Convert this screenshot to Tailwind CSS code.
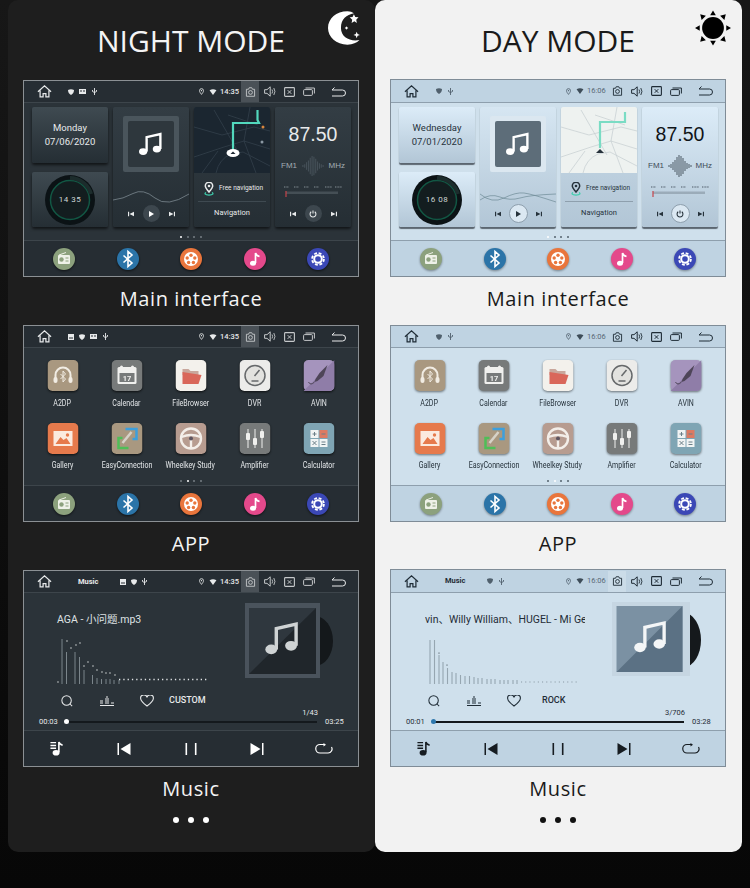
<!DOCTYPE html>
<html lang="en">
<head>
  <meta charset="UTF-8" />
  <title>Night mode / Day mode</title>
  <script src="https://cdn.jsdelivr.net/npm/@tailwindcss/browser@4"></script>
</head>
<body class="w-[750px] h-[888px] overflow-hidden bg-linear-to-b from-[#171717] to-[#070707] font-['Roboto','Noto_Sans_CJK_SC',sans-serif]">

<!-- shared icons -->
<svg class="hidden" xmlns="http://www.w3.org/2000/svg">
  <symbol id="home" viewBox="0 0 16 16"><path d="M1 8.2 8 2l7 6.2M3.3 6.8v7h3.2v-3.6h3v3.6h3.2v-7" fill="none" stroke="currentColor" stroke-width="1.3"/></symbol>
  <symbol id="shield" viewBox="0 0 6 6"><path d="M0 1q3-1.6 6 0 0 3.4-3 5-3-1.600-3-5z" fill="currentColor"/></symbol>
  <symbol id="box" viewBox="0 0 6 6"><path d="M0 0h6v6H0zM1 3.500v1h4v-1z" fill="currentColor" fill-rule="evenodd"/></symbol>
  <symbol id="card" viewBox="0 0 7 5"><path d="M0 0h7v5H0zM1 1.500v1h2v-1zM4 1.500v1h2v-1z" fill="currentColor" fill-rule="evenodd"/></symbol>
  <symbol id="usb" viewBox="0 0 5 7"><path d="M2.500 0v7M.5 2v1.500l2 1 2-1V2" fill="none" stroke="currentColor" stroke-width=".9"/></symbol>
  <symbol id="pin" viewBox="0 0 6 8"><path d="M3 7.500C1.500 5.500.6 4.400.6 3a2.400 2.400 0 0 1 4.800 0C5.400 4.400 4.500 5.500 3 7.500z" fill="none" stroke="currentColor"/><circle cx="3" cy="3" r=".8" fill="currentColor"/></symbol>
  <symbol id="wifi" viewBox="0 0 8 7"><path d="M0 1.500q4-2.400 8 0L4 7z" fill="currentColor"/></symbol>
  <symbol id="cam" viewBox="0 0 12 11"><path d="M1.500 2.500h2.300L4.600.8h2.800l.8 1.700h2.300v7.700h-9z" fill="none" stroke="currentColor"/><circle cx="6" cy="6" r="2.100" fill="none" stroke="currentColor"/></symbol>
  <symbol id="speaker" viewBox="0 0 12 11"><path d="M.6 3.700h2.400L6.200.8v9.400L3 7.300H.6z" fill="none" stroke="currentColor"/><path d="M8 3.500q1.300 2 0 4M9.800 2q2.300 3.500 0 7" fill="none" stroke="currentColor" stroke-width=".9"/></symbol>
  <symbol id="xbox" viewBox="0 0 11 10"><rect x=".6" y=".6" width="9.800" height="8.800" rx=".8" fill="none" stroke="currentColor" stroke-width="1.100"/><path d="m3.700 3.200 3.600 3.600m0-3.600L3.700 6.800" stroke="currentColor"/></symbol>
  <symbol id="windows" viewBox="0 0 12 9"><rect x=".6" y="2.600" width="8.800" height="5.800" rx="1" fill="none" stroke="currentColor"/><path d="M2.500 1h8.900v5.500" fill="none" stroke="currentColor"/></symbol>
  <symbol id="back" viewBox="0 0 15 10"><path d="M3.500.5 1 3h10.500a3 3 0 0 1 0 6H1" fill="none" stroke="currentColor"/></symbol>

  <symbol id="d-radio" viewBox="0 0 22 22"><circle cx="11" cy="11" r="11" fill="#8ca17d"/><rect x="5" y="7" width="12" height="9" rx="1" fill="#eef1e8"/><circle cx="8.500" cy="11.500" r="2.200" fill="#8ca17d"/><path d="M12.500 10h3M12.500 13h3" stroke="#8ca17d"/><path d="m6 7 7-2.500" stroke="#eef1e8"/></symbol>
  <symbol id="d-bt" viewBox="0 0 22 22"><circle cx="11" cy="11" r="11" fill="#2b74a8"/><path d="m6.500 7.500 8.500 7.500-4 3.500V3.500l4 3.500-8.500 7.500" fill="none" stroke="#fff" stroke-width="1.600"/></symbol>
  <symbol id="d-film" viewBox="0 0 22 22"><circle cx="11" cy="11" r="11" fill="#e9753c"/><circle cx="11" cy="11" r="7" fill="#fff"/><g fill="#e9753c"><circle cx="11" cy="7.200" r="1.700"/><circle cx="14.800" cy="10" r="1.700"/><circle cx="13.400" cy="14.500" r="1.700"/><circle cx="8.600" cy="14.500" r="1.700"/><circle cx="7.200" cy="10" r="1.700"/></g></symbol>
  <symbol id="d-note" viewBox="0 0 22 22"><circle cx="11" cy="11" r="11" fill="#e4498b"/><path d="M11.500 15V5q.5 2.500 4 3.500" fill="none" stroke="#fff" stroke-width="1.700"/><ellipse cx="9" cy="15.200" rx="3" ry="2.500" fill="#fff"/></symbol>
  <symbol id="d-gear" viewBox="0 0 22 22"><circle cx="11" cy="11" r="11" fill="#3b48b6"/><circle cx="11" cy="11" r="5.900" fill="none" stroke="#fff" stroke-width="1.800" stroke-dasharray="2.900 1.730"/><circle cx="11" cy="11" r="3.800" fill="none" stroke="#fff" stroke-width="2"/></symbol>

  <symbol id="note" viewBox="0 0 24 24"><path d="M8.500 18V6.500l11-2.500v12" fill="none" stroke="currentColor" stroke-width="1.900"/><ellipse cx="5.700" cy="18" rx="3.300" ry="2.700" fill="currentColor"/><ellipse cx="16.700" cy="16" rx="3.300" ry="2.700" fill="currentColor"/></symbol>
  <symbol id="prev" viewBox="0 0 8 8"><path d="M0 1h1.500v6H0zM8 1v6L2 4z" fill="currentColor"/></symbol>
  <symbol id="next" viewBox="0 0 8 8"><path d="M6.500 1H8v6H6.500zM0 1v6l6-3z" fill="currentColor"/></symbol>
  <symbol id="clock" viewBox="0 0 50 50"><circle cx="25" cy="25" r="25" fill="#0b1215"/><circle cx="25" cy="25" r="19.500" fill="#131d1f" stroke="#125744" stroke-width="1.500"/><path d="M25 3a22 22 0 0 1 21 16" fill="none" stroke="#1c2c2c" stroke-width="4"/></symbol>
  <symbol id="map" viewBox="0 0 76 66"><g fill="none" stroke="currentColor" stroke-width=".7"><path d="M20 3 46 48M0 50l30-10 20-6 26 8M22 66q3-14 15-19l12-2 27 14M56 0l-6 34 12 32M0 20l28 8 32-8 16 4M8 66 24 44M34 8l30 10"/></g></symbol>
  <symbol id="wave" viewBox="0 0 24 22"><path d="M1 10v2M3 9v4M5 7v8M7 5v12M9 2v18M11 0v22M13 1v20M15 3v16M17 6v10M19 8v6M21 9v4M23 10v2" stroke="currentColor" stroke-width="1.100"/></symbol>
  <symbol id="scale" viewBox="0 0 60 14"><path d="M1 3h5M11 3h5M21 3h5M31 3h5M42 3h7M52 3h7" stroke="currentColor" stroke-width="1.400" stroke-dasharray="1 .6" opacity=".6"/><rect x="3" y="7.500" width="52" height="2.500" fill="currentColor" opacity=".28"/><path d="M3 7v6" stroke="#c7434a" stroke-width="1.200"/></symbol>
  <symbol id="navpin" viewBox="0 0 12 14"><path d="M6 10C3.500 7 2.300 5.600 2.300 4a3.700 3.700 0 0 1 7.400 0C9.700 5.600 8.500 7 6 10z" fill="none" stroke="currentColor" stroke-width="1.500"/><circle cx="6" cy="4" r="1.300" fill="currentColor"/><path d="M3 10.500q-3 2 3 2.700 6-.7 3-2.700" fill="none" stroke="#3fcfae" stroke-width="1.200"/></symbol>
  <symbol id="power" viewBox="0 0 9 9"><path d="M2.500 2a3.300 3.300 0 1 0 4 0M4.500.5V4" fill="none" stroke="currentColor" stroke-width="1.200"/></symbol>

  <symbol id="a-a2dp" viewBox="0 0 31 31"><rect width="31" height="31" rx="5" fill="#a99880"/><path d="M8 19v-4a7.500 7.500 0 0 1 15 0v4" fill="none" stroke="#f1ece3" stroke-width="2"/><rect x="6" y="17" width="4" height="6" rx="2" fill="#f1ece3"/><rect x="21" y="17" width="4" height="6" rx="2" fill="#f1ece3"/><path d="m13 14 5 5-2.500 3V11l2.500 3-5 5" fill="none" stroke="#f1ece3"/></symbol>
  <symbol id="a-cal" viewBox="0 0 31 31"><rect width="31" height="31" rx="5" fill="#777a7a"/><rect x="6" y="7" width="19" height="17" rx="1.500" fill="#f0f0ee"/><rect x="8" y="13" width="15" height="9" fill="#777a7a"/><circle cx="10" cy="7" r="1.500" fill="#f0f0ee"/><circle cx="21" cy="7" r="1.500" fill="#f0f0ee"/><text x="15.500" y="20.500" text-anchor="middle" font-size="7.500" font-weight="700" fill="#f0f0ee" font-family="Roboto">17</text></symbol>
  <symbol id="a-file" viewBox="0 0 31 31"><rect width="31" height="31" rx="5" fill="#f3f1ec"/><path d="M7 9h6l2 2h8v4H7z" fill="#c9a79c"/><path d="M7 24V12l19 3-3 9z" fill="#d9675a"/></symbol>
  <symbol id="a-dvr" viewBox="0 0 31 31"><rect width="31" height="31" rx="5" fill="#ececea"/><circle cx="15.500" cy="15.500" r="10" fill="#e2e2df" stroke="#66696b" stroke-width="1.500"/><path d="m15 16 5-6" stroke="#66696b" stroke-width="1.500"/><path d="M12 21h7" stroke="#66696b" stroke-width="1.500"/></symbol>
  <symbol id="a-avin" viewBox="0 0 31 31"><rect width="31" height="31" rx="5" fill="#a594bd"/><path d="M31 0v26a5 5 0 0 1-5 5H0z" fill="#8f7da8"/><path d="m24 5-8 8-4 6-1 3 3-1 6-5z" fill="#4e4558"/><path d="M11 22q-4 4-6 0" fill="none" stroke="#4e4558"/></symbol>
  <symbol id="a-gal" viewBox="0 0 31 31"><rect width="31" height="31" rx="5" fill="#e67a4c"/><rect x="6" y="8" width="19" height="15" fill="#fbeadf"/><path d="m8 21 5-7 3 3 3-2 4 6z" fill="#e67a4c"/><circle cx="20" cy="12" r="1.700" fill="#e67a4c"/></symbol>
  <symbol id="a-easy" viewBox="0 0 31 31"><rect width="31" height="31" rx="5" fill="#a99880"/><path d="M14 6h11v10h-4" fill="none" stroke="#3d9fdc" stroke-width="2.500"/><path d="M17 25H7V15h4" fill="none" stroke="#4fbe57" stroke-width="2.500"/><path d="m11 20 9-11" stroke="#d6d2c8" stroke-width="2.500"/></symbol>
  <symbol id="a-wheel" viewBox="0 0 31 31"><rect width="31" height="31" rx="5" fill="#b79c90"/><circle cx="15.500" cy="15.500" r="10" fill="none" stroke="#f3eee9" stroke-width="2.400"/><path d="M6 14q9.500-4 19 0M15.500 17v8" stroke="#f3eee9" stroke-width="2.400" fill="none"/><circle cx="15.500" cy="15.500" r="2" fill="#5e5560"/></symbol>
  <symbol id="a-amp" viewBox="0 0 31 31"><rect width="31" height="31" rx="5" fill="#777a7a"/><path d="M8.500 6v19M15.500 6v19M22.500 6v19" stroke="#f0f0ee"/><rect x="6.500" y="10" width="4" height="7" rx="1" fill="#f0f0ee"/><rect x="13.500" y="15" width="4" height="7" rx="1" fill="#f0f0ee"/><rect x="20.500" y="8" width="4" height="7" rx="1" fill="#f0f0ee"/></symbol>
  <symbol id="a-calc" viewBox="0 0 31 31"><rect width="31" height="31" rx="5" fill="#7fa5b4"/><rect x="7" y="7" width="8" height="8" fill="#f1f4f4"/><rect x="16" y="7" width="8" height="8" fill="#dc7a62"/><rect x="7" y="16" width="8" height="8" fill="#f1f4f4"/><rect x="16" y="16" width="8" height="8" fill="#f1f4f4"/><path d="M9 11h4M11 9v4M18 11h4M9 18l4 4m0-4-4 4M18 19h4M18 21.500h4" stroke="#6b7f88"/></symbol>

  <symbol id="m-search" viewBox="0 0 14 14"><circle cx="6.500" cy="6.500" r="5.500" fill="none" stroke="currentColor" stroke-width="1.200"/><path d="m10.500 10.500 2.500 2.500" stroke="currentColor" stroke-width="1.200"/></symbol>
  <symbol id="m-eq" viewBox="0 0 14 10"><path d="M0 9.500h14M0 7h3M5 7h4M11 7h3M0 5h3M5 5h4M5 3h4M6 1h2" stroke="currentColor"/></symbol>
  <symbol id="m-heart" viewBox="0 0 14 12"><path d="M7 11C3 8 .7 6.200.7 3.700A3 3 0 0 1 7 2.500a3 3 0 0 1 6.300 1.200C13.300 6.200 11 8 7 11z" fill="none" stroke="currentColor" stroke-width="1.100"/></symbol>
  <symbol id="m-list" viewBox="0 0 14 16"><path d="M0 1h6v1.500H0zM0 4h6v1.500H0zM0 7h6v1.500H0z" fill="currentColor"/><path d="M9 12V1q.5 2.500 4 3.500" fill="none" stroke="currentColor" stroke-width="1.700"/><ellipse cx="6" cy="12.500" rx="3.700" ry="3" fill="currentColor"/></symbol>
  <symbol id="m-prev" viewBox="0 0 13 12"><path d="M0 0h1.500v12H0zM13 0v12L3 6z" fill="currentColor"/></symbol>
  <symbol id="m-next" viewBox="0 0 13 12"><path d="M11.500 0H13v12h-1.500zM0 0v12l10-6z" fill="currentColor"/></symbol>
  <symbol id="m-pause" viewBox="0 0 11 12"><path d="M0 0h1.600v12H0zM9.400 0H11v12H9.400z" fill="currentColor"/></symbol>
  <symbol id="m-repeat" viewBox="0 0 18 11"><path d="M9 1.500H5a4 4 0 0 0 0 8.500h8a4 4 0 0 0 3.500-6" fill="none" stroke="currentColor" stroke-width="1.200"/><path d="M8.500 0v3.500L11 1.700z" fill="currentColor"/></symbol>
</svg>

<div class="flex pl-2 h-[852px]">

  <!-- NIGHT -->
  <section class="relative w-[367px] h-[852px] pl-[15px] rounded-[10px] bg-[#1e1e1e] text-[#f4f4f4]">
    <h2 class="w-[336px] h-[80px] flex items-center justify-center text-[30px] font-['Open_Sans',sans-serif] font-normal">NIGHT MODE</h2>
    <svg class="absolute left-[320px] top-[10px] w-[37px] h-[36px]" viewBox="0 0 40 38"><path d="M21 1C9 1 0 9 0 19s9 18 21 18c6 0 10-2 13-5-10 2-20-3-20-13S20 5 28 3c-2-1-4-2-7-2z" fill="#fff"/><path d="m28 4 1.500 3 3.500.5-2.500 2.500.7 3.500-2.700-1.700-3 1.700.7-3.500L23.500 7.500l3-.5zM31 23l1 2.500 2.500 1-2.500 1-1 2.500-1-2.500-2.500-1 2.500-1zM20 17l.7 1.300 1.300.7-1.300.7-.7 1.300-.7-1.300-1.300-.7 1.300-.7z" fill="#fff"/></svg>

    <!-- main -->
    <div class="w-[336px] h-[197px] border border-[#8b9094] bg-[#2b3339] flex flex-col">
      <div class="h-[22px] shrink-0 flex items-center pl-[13px] pr-[12px] bg-[#262d33] border-b border-[#3d454b] text-[#e8eaeb]">
        <svg class="w-[15px] h-[15px]"><use href="#home"/></svg>
        <div class="flex items-center gap-[5px] ml-[16px]">
          <svg class="w-[6px] h-[6px]"><use href="#shield"/></svg>
          <svg class="w-[7px] h-[5px]"><use href="#card"/></svg>
          <svg class="w-[5px] h-[7px] ml-[1px]"><use href="#usb"/></svg>
        </div>
        <div class="ml-auto flex items-center h-[21px]">
          <svg class="w-[5px] h-[7px]"><use href="#pin"/></svg>
          <svg class="w-[8px] h-[6px] ml-[5px]"><use href="#wifi"/></svg>
          <span class="ml-[3px] w-[18px] text-[7.5px] font-medium">14:35</span>
          <div class="ml-[3px] w-[18px] h-[21px] flex items-center justify-center bg-[#4a5157] text-[#c5c8ca]"><svg class="w-[11px] h-[10px]"><use href="#cam"/></svg></div>
          <svg class="w-[12px] h-[11px] ml-[5px] text-[#c5c8ca]"><use href="#speaker"/></svg>
          <svg class="w-[11px] h-[10px] ml-[8px] text-[#c5c8ca]"><use href="#xbox"/></svg>
          <svg class="w-[12px] h-[9px] ml-[8px] text-[#c5c8ca]"><use href="#windows"/></svg>
          <svg class="w-[15px] h-[10px] ml-[16px]"><use href="#back"/></svg>
        </div>
      </div>
      <div class="h-[137px] shrink-0 px-[8px] pt-[4px]">
        <div class="grid grid-cols-[76px_76px_76px_76px] gap-x-[5px] h-[120px]">
          <div class="flex flex-col gap-[9px]">
            <div class="h-[56px] rounded-[2px] bg-linear-to-b from-[#3f4a51] to-[#252e34] shadow-[0_2px_3px_rgba(0,0,0,.6)] flex flex-col items-center justify-center text-[9.5px] leading-[14px] text-[#e8eaeb]"><span>Monday</span><span>07/06/2020</span></div>
            <div class="h-[55px] rounded-[2px] bg-linear-to-b from-[#3f4a51] to-[#252e34] shadow-[0_2px_3px_rgba(0,0,0,.6)] flex items-center justify-center">
              <div class="relative w-[50px] h-[50px]"><svg class="w-[50px] h-[50px]"><use href="#clock"/></svg><span class="absolute inset-0 flex items-center justify-center text-[8px] tracking-[.5px] text-[#cfd6d6]">14 35</span></div>
            </div>
          </div>
          <div class="rounded-[2px] bg-linear-to-b from-[#333d44] to-[#252e34] shadow-[0_2px_3px_rgba(0,0,0,.6)] flex flex-col items-center pt-[9px]">
            <div class="w-[56px] h-[56px] p-[5px] bg-[#4a555c] rounded-[2px]"><div class="w-[46px] h-[46px] rounded-[2px] bg-[#2e373d] flex items-center justify-center text-white"><svg class="w-[30px] h-[30px]"><use href="#note"/></svg></div></div>
            <svg class="w-[76px] h-[14px] mt-[18px]" viewBox="0 0 76 14"><path d="M0 10Q10 9 20 3.500T42 8t34-4" fill="none" stroke="#7b888f" stroke-width=".8"/></svg>
            <div class="flex items-center text-[#e8eaeb] mt-auto mb-[5px]">
              <svg class="w-[6px] h-[6px]"><use href="#prev"/></svg>
              <div class="w-[17px] h-[17px] mx-[9px] rounded-full bg-[#3d474e] flex items-center justify-center"><div class="w-0 h-0 border-y-[3px] border-y-transparent border-l-[5px] border-l-white ml-[1px]"></div></div>
              <svg class="w-[6px] h-[6px]"><use href="#next"/></svg>
            </div>
          </div>
          <div class="rounded-[2px] overflow-hidden bg-linear-to-b from-[#333d44] to-[#252e34] shadow-[0_2px_3px_rgba(0,0,0,.6)] flex flex-col items-center text-[#e8eaeb]">
            <svg class="w-[76px] h-[66px] shrink-0 bg-[#1b2630] text-[#36434f]" viewBox="0 0 76 66"><use href="#map"/><path d="M39 43V16h26l-1.500-3V3" fill="none" stroke="#52d8bd" stroke-width="2.200"/><ellipse cx="39" cy="46" rx="6.500" ry="4" fill="#fff"/><path d="m36.500 47 2.500-2.500 2.500 2.500z" fill="#1b2630"/><circle cx="69" cy="20" r="1.500" fill="#d8873f"/><circle cx="68" cy="35" r="1.500" fill="#8b98a3"/></svg>
            <div class="flex items-center mt-[9px] self-start pl-[9px]"><svg class="w-[12px] h-[14px]"><use href="#navpin"/></svg><span class="ml-[4px] text-[6.5px] whitespace-nowrap">Free navigation</span></div>
            <div class="w-[68px] h-px bg-[#3f4a51] mt-[5px]"></div>
            <span class="text-[7.500px] mt-[5px]">Navigation</span>
          </div>
          <div class="rounded-[2px] bg-linear-to-b from-[#333d44] to-[#252e34] shadow-[0_2px_3px_rgba(0,0,0,.6)] flex flex-col items-center text-[#e8eaeb]">
            <span class="font-['Liberation_Sans',sans-serif] text-[19.500px] leading-[20px] mt-[17px]">87.50</span>
            <div class="flex items-center w-[64px] justify-between mt-[11px] font-['Liberation_Sans',sans-serif] text-[8px] text-[#a3adb2]"><span>FM1</span><svg class="w-[22px] h-[22px] text-[#47525a]"><use href="#wave"/></svg><span>MHz</span></div>
            <svg class="w-[60px] h-[14px] mt-[7px] text-[#8f9aa0]"><use href="#scale"/></svg>
            <div class="flex items-center text-[#e8eaeb] mt-auto mb-[5px]">
              <svg class="w-[6px] h-[6px]"><use href="#prev"/></svg>
              <div class="w-[17px] h-[17px] mx-[9px] rounded-full bg-[#3d474e] flex items-center justify-center"><svg class="w-[8px] h-[8px]"><use href="#power"/></svg></div>
              <svg class="w-[6px] h-[6px]"><use href="#next"/></svg>
            </div>
          </div>
        </div>
        <div class="flex justify-center gap-[4.500px] mt-[9px]"><i class="w-[2px] h-[2px] rounded-full bg-white"></i><i class="w-[2px] h-[2px] rounded-full bg-[#777f85]"></i><i class="w-[2px] h-[2px] rounded-full bg-[#777f85]"></i><i class="w-[2px] h-[2px] rounded-full bg-[#777f85]"></i></div>
      </div>
      <div class="h-[36px] shrink-0 px-[29px] flex items-center justify-between bg-[#262d33] border-t border-[#3d454b]">
        <svg class="w-[22px] h-[22px] drop-shadow-[0_1px_1px_rgba(0,0,0,.6)]"><use href="#d-radio"/></svg>
        <svg class="w-[22px] h-[22px] drop-shadow-[0_1px_1px_rgba(0,0,0,.6)]"><use href="#d-bt"/></svg>
        <svg class="w-[22px] h-[22px] drop-shadow-[0_1px_1px_rgba(0,0,0,.6)]"><use href="#d-film"/></svg>
        <svg class="w-[22px] h-[22px] drop-shadow-[0_1px_1px_rgba(0,0,0,.6)]"><use href="#d-note"/></svg>
        <svg class="w-[22px] h-[22px] drop-shadow-[0_1px_1px_rgba(0,0,0,.6)]"><use href="#d-gear"/></svg>
      </div>
    </div>
    <p class="w-[336px] h-[48px] pb-[4px] flex items-center justify-center text-[20px] tracking-[.6px] font-['Open_Sans',sans-serif]">Main interface</p>

    <!-- app -->
    <div class="w-[336px] h-[197px] border border-[#8b9094] bg-[#2b3339] flex flex-col">
      <div class="h-[22px] shrink-0 flex items-center pl-[13px] pr-[12px] bg-[#262d33] border-b border-[#3d454b] text-[#e8eaeb]">
        <svg class="w-[15px] h-[15px]"><use href="#home"/></svg>
        <div class="flex items-center gap-[5px] ml-[16px]">
          <svg class="w-[6px] h-[6px]"><use href="#box"/></svg>
          <svg class="w-[6px] h-[6px]"><use href="#shield"/></svg>
          <svg class="w-[7px] h-[5px]"><use href="#card"/></svg>
          <svg class="w-[5px] h-[7px] ml-[1px]"><use href="#usb"/></svg>
        </div>
        <div class="ml-auto flex items-center h-[21px]">
          <svg class="w-[5px] h-[7px]"><use href="#pin"/></svg>
          <svg class="w-[8px] h-[6px] ml-[5px]"><use href="#wifi"/></svg>
          <span class="ml-[3px] w-[18px] text-[7.5px] font-medium">14:35</span>
          <div class="ml-[3px] w-[18px] h-[21px] flex items-center justify-center bg-[#4a5157] text-[#c5c8ca]"><svg class="w-[11px] h-[10px]"><use href="#cam"/></svg></div>
          <svg class="w-[12px] h-[11px] ml-[5px] text-[#c5c8ca]"><use href="#speaker"/></svg>
          <svg class="w-[11px] h-[10px] ml-[8px] text-[#c5c8ca]"><use href="#xbox"/></svg>
          <svg class="w-[12px] h-[9px] ml-[8px] text-[#c5c8ca]"><use href="#windows"/></svg>
          <svg class="w-[15px] h-[10px] ml-[16px]"><use href="#back"/></svg>
        </div>
      </div>
      <div class="h-[137px] shrink-0 pt-[12px]">
        <div class="w-[320px] mx-auto -translate-x-[.5px] grid grid-cols-5 gap-y-[15px] text-[8.5px] leading-[10px] text-center text-[#e3e6e8]">
          <div class="flex flex-col items-center gap-[6.500px]"><svg class="w-[31px] h-[31px] drop-shadow-[0_1px_1px_rgba(0,0,0,.7)]"><use href="#a-a2dp"/></svg><span class="scale-x-[.83] whitespace-nowrap">A2DP</span></div>
          <div class="flex flex-col items-center gap-[6.500px]"><svg class="w-[31px] h-[31px] drop-shadow-[0_1px_1px_rgba(0,0,0,.7)]"><use href="#a-cal"/></svg><span class="scale-x-[.83] whitespace-nowrap">Calendar</span></div>
          <div class="flex flex-col items-center gap-[6.500px]"><svg class="w-[31px] h-[31px] drop-shadow-[0_1px_1px_rgba(0,0,0,.7)]"><use href="#a-file"/></svg><span class="scale-x-[.83] whitespace-nowrap">FileBrowser</span></div>
          <div class="flex flex-col items-center gap-[6.500px]"><svg class="w-[31px] h-[31px] drop-shadow-[0_1px_1px_rgba(0,0,0,.7)]"><use href="#a-dvr"/></svg><span class="scale-x-[.83] whitespace-nowrap">DVR</span></div>
          <div class="flex flex-col items-center gap-[6.500px]"><svg class="w-[31px] h-[31px] drop-shadow-[0_1px_1px_rgba(0,0,0,.7)]"><use href="#a-avin"/></svg><span class="scale-x-[.83] whitespace-nowrap">AVIN</span></div>
          <div class="flex flex-col items-center gap-[6.500px]"><svg class="w-[31px] h-[31px] drop-shadow-[0_1px_1px_rgba(0,0,0,.7)]"><use href="#a-gal"/></svg><span class="scale-x-[.83] whitespace-nowrap">Gallery</span></div>
          <div class="flex flex-col items-center gap-[6.500px]"><svg class="w-[31px] h-[31px] drop-shadow-[0_1px_1px_rgba(0,0,0,.7)]"><use href="#a-easy"/></svg><span class="scale-x-[.83] whitespace-nowrap">EasyConnection</span></div>
          <div class="flex flex-col items-center gap-[6.500px]"><svg class="w-[31px] h-[31px] drop-shadow-[0_1px_1px_rgba(0,0,0,.7)]"><use href="#a-wheel"/></svg><span class="scale-x-[.83] whitespace-nowrap">Wheelkey Study</span></div>
          <div class="flex flex-col items-center gap-[6.500px]"><svg class="w-[31px] h-[31px] drop-shadow-[0_1px_1px_rgba(0,0,0,.7)]"><use href="#a-amp"/></svg><span class="scale-x-[.83] whitespace-nowrap">Amplifier</span></div>
          <div class="flex flex-col items-center gap-[6.500px]"><svg class="w-[31px] h-[31px] drop-shadow-[0_1px_1px_rgba(0,0,0,.7)]"><use href="#a-calc"/></svg><span class="scale-x-[.83] whitespace-nowrap">Calculator</span></div>
        </div>
        <div class="flex justify-center gap-[4.500px] mt-[10px]"><i class="w-[2px] h-[2px] rounded-full bg-[#777f85]"></i><i class="w-[2px] h-[2px] rounded-full bg-white"></i><i class="w-[2px] h-[2px] rounded-full bg-[#777f85]"></i><i class="w-[2px] h-[2px] rounded-full bg-[#777f85]"></i></div>
      </div>
      <div class="h-[36px] shrink-0 px-[29px] flex items-center justify-between bg-[#262d33] border-t border-[#3d454b]">
        <svg class="w-[22px] h-[22px] drop-shadow-[0_1px_1px_rgba(0,0,0,.6)]"><use href="#d-radio"/></svg>
        <svg class="w-[22px] h-[22px] drop-shadow-[0_1px_1px_rgba(0,0,0,.6)]"><use href="#d-bt"/></svg>
        <svg class="w-[22px] h-[22px] drop-shadow-[0_1px_1px_rgba(0,0,0,.6)]"><use href="#d-film"/></svg>
        <svg class="w-[22px] h-[22px] drop-shadow-[0_1px_1px_rgba(0,0,0,.6)]"><use href="#d-note"/></svg>
        <svg class="w-[22px] h-[22px] drop-shadow-[0_1px_1px_rgba(0,0,0,.6)]"><use href="#d-gear"/></svg>
      </div>
    </div>
    <p class="w-[336px] h-[48px] pb-[4px] flex items-center justify-center text-[20px] tracking-[.6px] font-['Open_Sans',sans-serif]">APP</p>

    <!-- music -->
    <div class="w-[336px] h-[197px] border border-[#8b9094] bg-[#2b3339] flex flex-col">
      <div class="h-[22px] shrink-0 flex items-center pl-[13px] pr-[12px] bg-[#262d33] border-b border-[#3d454b] text-[#e8eaeb]">
        <svg class="w-[15px] h-[15px]"><use href="#home"/></svg>
        <span class="ml-[26px] text-[7.5px] font-bold">Music</span>
        <div class="flex items-center gap-[5px] ml-[21px]">
          <svg class="w-[6px] h-[6px]"><use href="#box"/></svg>
          <svg class="w-[6px] h-[6px]"><use href="#shield"/></svg>
          <svg class="w-[5px] h-[7px]"><use href="#usb"/></svg>
        </div>
        <div class="ml-auto flex items-center h-[21px]">
          <svg class="w-[5px] h-[7px]"><use href="#pin"/></svg>
          <svg class="w-[8px] h-[6px] ml-[5px]"><use href="#wifi"/></svg>
          <span class="ml-[3px] w-[18px] text-[7.5px] font-medium">14:35</span>
          <div class="ml-[3px] w-[18px] h-[21px] flex items-center justify-center bg-[#4a5157] text-[#c5c8ca]"><svg class="w-[11px] h-[10px]"><use href="#cam"/></svg></div>
          <svg class="w-[12px] h-[11px] ml-[5px] text-[#c5c8ca]"><use href="#speaker"/></svg>
          <svg class="w-[11px] h-[10px] ml-[8px] text-[#c5c8ca]"><use href="#xbox"/></svg>
          <svg class="w-[12px] h-[9px] ml-[8px] text-[#c5c8ca]"><use href="#windows"/></svg>
          <svg class="w-[15px] h-[10px] ml-[16px]"><use href="#back"/></svg>
        </div>
      </div>
      <div class="h-[137px] shrink-0 text-[#e8eaeb] flex flex-col">
        <div class="h-[115px] flex">
          <div class="w-[221px] pl-[33px] shrink-0">
            <p class="mt-[20px] h-[14px] text-[10.500px] leading-[14px] text-[#dfe2e4] whitespace-nowrap">AGA - 小问题.mp3</p>
            <svg class="w-[152px] h-[46px] mt-[11px]" viewBox="0 0 152 46"><path d="M5 46V1M9.500 46V14M18 46V14M22.500 46V19M27 46V32M35.500 46V37M40 46V40M44.500 46V41M49 46V41M53 46V41M57 46V42M62 46V42" stroke="#7b858b" stroke-width="1"/><path d="M1 44h0M10 3h0M14 10h0M19 7h0M23 5h0M27 28h0M31 24h0M36 28h0M40 32h0M45 34h0M49 35h0M53 35h0M58 37h0" stroke="#f0f2f3" stroke-width="1.300" stroke-linecap="round"/><path d="M62 41.500H152" stroke="#e0e3e5" stroke-width="1.300" stroke-dasharray="1.300 3"/></svg>
            <div class="mt-[9px] flex items-center h-[16px] pl-[4px]">
              <svg class="w-[12px] h-[12px]"><use href="#m-search"/></svg>
              <svg class="w-[14px] h-[10px] ml-[27px]"><use href="#m-eq"/></svg>
              <svg class="w-[14px] h-[12px] ml-[26px]"><use href="#m-heart"/></svg>
              <span class="ml-[15px] text-[9px] font-medium">CUSTOM</span>
            </div>
          </div>
          <svg class="w-[89px] h-[76px] mt-[10px]" viewBox="0 0 89 76"><ellipse cx="70" cy="38" rx="18" ry="25" fill="#14181b"/><rect width="75" height="75" fill="#4a535c"/><rect x="4" y="5" width="67" height="66" fill="#2f373e"/><path d="M71 5v66H4z" fill="#20262b"/><g transform="translate(16 14) scale(1.800)" color="#cfd3d4"><use href="#note" width="24" height="24"/></g></svg>
        </div>
        <p class="mr-[40px] text-right text-[7.5px] leading-[10px]">1/43</p>
        <div class="flex items-center h-[10px] -mt-[1px] pl-[15px] pr-[15px] text-[7.5px]">
          <span class="w-[18px]">00:03</span>
          <div class="relative flex-1 mx-[8px] h-[1.500px] bg-[#14191d]"><i class="absolute -left-[1px] -top-[2px] w-[5px] h-[5px] rounded-full bg-white"></i></div>
          <span class="w-[18px]">03:25</span>
        </div>
      </div>
      <div class="h-[36px] shrink-0 pl-[24px] pr-[25px] flex items-center justify-between bg-[#262d33] border-t border-[#3d454b] text-white">
        <svg class="w-[18px] h-[15px]"><use href="#m-list"/></svg>
        <svg class="w-[18px] h-[12px]"><use href="#m-prev"/></svg>
        <svg class="w-[18px] h-[12px]"><use href="#m-pause"/></svg>
        <svg class="w-[18px] h-[12px]"><use href="#m-next"/></svg>
        <svg class="w-[18px] h-[11px]"><use href="#m-repeat"/></svg>
      </div>
    </div>
    <p class="w-[336px] h-[48px] pb-[4px] flex items-center justify-center text-[20px] tracking-[.6px] font-['Open_Sans',sans-serif]">Music</p>
    <div class="w-[336px] flex justify-center gap-[9px] mt-[2px]"><i class="w-[6px] h-[6px] rounded-full bg-white"></i><i class="w-[6px] h-[6px] rounded-full bg-white"></i><i class="w-[6px] h-[6px] rounded-full bg-white"></i></div>
  </section>

  <!-- DAY -->
  <section class="relative w-[367px] h-[852px] pl-[15px] rounded-[10px] bg-[#f2f2f2] text-[#1a1a1a]">
    <h2 class="w-[336px] h-[79px] pt-[1px] flex items-center justify-center text-[30px] font-['Open_Sans',sans-serif] font-normal">DAY MODE</h2>
    <svg class="absolute left-[320px] top-[10px] w-[36px] h-[36px]" viewBox="0 0 38 37"><circle cx="19" cy="18.500" r="11.500" fill="#000"/><path d="M19 0l3 5h-6zM19 37l3-5h-6zM0 18.500l5-3v6zM38 18.500l-5-3v6zM5.500 4l6 1.500L7 10zM32.500 4l-6 1.500L31 10zM5.500 33l6-1.500L7 27zM32.500 33l-6-1.500L31 27z" fill="#000"/></svg>

    <!-- main -->
    <div class="w-[336px] h-[198px] border border-[#7f8c97] bg-[#cfe0ec] flex flex-col">
      <div class="h-[23px] shrink-0 flex items-center pl-[13px] pr-[12px] bg-[#bfd3e2] border-b border-[#8e9fad] text-[#1f2c36]">
        <svg class="w-[15px] h-[15px]"><use href="#home"/></svg>
        <div class="flex items-center gap-[6px] ml-[17px] text-[#50606d]">
          <svg class="w-[6px] h-[6px]"><use href="#shield"/></svg>
          <svg class="w-[5px] h-[7px]"><use href="#usb"/></svg>
        </div>
        <div class="ml-auto flex items-center h-[21px]">
          <svg class="w-[5px] h-[7px] text-[#50606d]"><use href="#pin"/></svg>
          <svg class="w-[8px] h-[6px] ml-[5px] text-[#3d4c58]"><use href="#wifi"/></svg>
          <span class="ml-[3px] w-[18px] text-[7.5px] text-[#586875]">16:06</span>
          <div class="ml-[3px] w-[18px] h-[21px] flex items-center justify-center"><svg class="w-[11px] h-[10px]"><use href="#cam"/></svg></div>
          <svg class="w-[12px] h-[11px] ml-[5px]"><use href="#speaker"/></svg>
          <svg class="w-[11px] h-[10px] ml-[8px]"><use href="#xbox"/></svg>
          <svg class="w-[12px] h-[9px] ml-[8px]"><use href="#windows"/></svg>
          <svg class="w-[15px] h-[10px] ml-[16px]"><use href="#back"/></svg>
        </div>
      </div>
      <div class="h-[137px] shrink-0 px-[8px] pt-[4px]">
        <div class="grid grid-cols-[76px_76px_76px_76px] gap-x-[5px] h-[120px]">
          <div class="flex flex-col gap-[9px]">
            <div class="h-[56px] rounded-[2px] bg-linear-to-b from-[#dcecf8] to-[#b2c6d6] shadow-[0_1.500px_1px_#5b6670] flex flex-col items-center justify-center text-[9.5px] leading-[14px] text-[#26323b]"><span>Wednesday</span><span>07/01/2020</span></div>
            <div class="h-[55px] rounded-[2px] bg-linear-to-b from-[#dcecf8] to-[#b2c6d6] shadow-[0_1.500px_1px_#5b6670] flex items-center justify-center">
              <div class="relative w-[50px] h-[50px]"><svg class="w-[50px] h-[50px]"><use href="#clock"/></svg><span class="absolute inset-0 flex items-center justify-center text-[8px] tracking-[.5px] text-[#cfd6d6]">16 08</span></div>
            </div>
          </div>
          <div class="rounded-[2px] bg-linear-to-b from-[#d6e6f2] to-[#b2c6d6] shadow-[0_1.500px_1px_#5b6670] flex flex-col items-center pt-[9px]">
            <div class="w-[56px] h-[56px] p-[5px] bg-[#dbe7f0] rounded-[2px]"><div class="w-[46px] h-[46px] rounded-[2px] bg-[#5d6d79] flex items-center justify-center text-white"><svg class="w-[30px] h-[30px]"><use href="#note"/></svg></div></div>
            <svg class="w-[76px] h-[14px] mt-[18px]" viewBox="0 0 76 14"><path d="M0 10Q10 3 20 7t20 1 36-4" fill="none" stroke="#6f8b96" stroke-width=".7"/><path d="M0 4q12 10 24 4t20-5 32 9" fill="none" stroke="#6f8b96" stroke-width=".7"/></svg>
            <div class="flex items-center text-[#26323b] mt-auto mb-[4px]">
              <svg class="w-[6px] h-[6px]"><use href="#prev"/></svg>
              <div class="w-[19px] h-[19px] mx-[8px] rounded-full bg-[#dbe8f2] border border-[#8e9fad] flex items-center justify-center"><div class="w-0 h-0 border-y-[3px] border-y-transparent border-l-[5px] border-l-[#26323b] ml-[1px]"></div></div>
              <svg class="w-[6px] h-[6px]"><use href="#next"/></svg>
            </div>
          </div>
          <div class="rounded-[2px] overflow-hidden bg-linear-to-b from-[#c9dbe8] to-[#b2c6d6] shadow-[0_1.500px_1px_#5b6670] flex flex-col items-center text-[#26323b]">
            <svg class="w-[76px] h-[66px] shrink-0 bg-[#eef2f0] text-[#c4cdd0]" viewBox="0 0 76 66"><use href="#map"/><path d="M39 41V15h25V5" fill="none" stroke="#7adcc4" stroke-width="2.200"/><path d="m35 46 4-4 4 4z" fill="#26323b"/></svg>
            <div class="flex items-center mt-[9px] self-start pl-[9px]"><svg class="w-[12px] h-[14px]"><use href="#navpin"/></svg><span class="ml-[4px] text-[6.5px] whitespace-nowrap">Free navigation</span></div>
            <div class="w-[68px] h-px bg-[#8e9fad] mt-[5px]"></div>
            <span class="text-[7.500px] mt-[5px]">Navigation</span>
          </div>
          <div class="rounded-[2px] bg-linear-to-b from-[#dcecf8] to-[#b2c6d6] shadow-[0_1.500px_1px_#5b6670] flex flex-col items-center text-[#101418]">
            <span class="font-['Liberation_Sans',sans-serif] text-[19.500px] leading-[20px] mt-[17px]">87.50</span>
            <div class="flex items-center w-[64px] justify-between mt-[11px] font-['Liberation_Sans',sans-serif] text-[8px] text-[#3f4c57]"><span>FM1</span><svg class="w-[26px] h-[22px] text-[#56646f]"><use href="#wave"/></svg><span>MHz</span></div>
            <svg class="w-[60px] h-[14px] mt-[7px] text-[#3f4c57]"><use href="#scale"/></svg>
            <div class="flex items-center text-[#26323b] mt-auto mb-[4px]">
              <svg class="w-[6px] h-[6px]"><use href="#prev"/></svg>
              <div class="w-[19px] h-[19px] mx-[8px] rounded-full bg-[#dbe8f2] border border-[#8e9fad] flex items-center justify-center"><svg class="w-[8px] h-[8px]"><use href="#power"/></svg></div>
              <svg class="w-[6px] h-[6px]"><use href="#next"/></svg>
            </div>
          </div>
        </div>
        <div class="flex justify-center gap-[4.500px] mt-[9px]"><i class="w-[2px] h-[2px] rounded-full bg-white"></i><i class="w-[2px] h-[2px] rounded-full bg-[#55636e]"></i><i class="w-[2px] h-[2px] rounded-full bg-[#55636e]"></i><i class="w-[2px] h-[2px] rounded-full bg-[#55636e]"></i></div>
      </div>
      <div class="h-[36px] shrink-0 px-[29px] flex items-center justify-between bg-[#bfd3e2] border-t border-[#8e9fad]">
        <svg class="w-[22px] h-[22px] drop-shadow-[0_1px_1px_rgba(0,0,0,.4)]"><use href="#d-radio"/></svg>
        <svg class="w-[22px] h-[22px] drop-shadow-[0_1px_1px_rgba(0,0,0,.4)]"><use href="#d-bt"/></svg>
        <svg class="w-[22px] h-[22px] drop-shadow-[0_1px_1px_rgba(0,0,0,.4)]"><use href="#d-film"/></svg>
        <svg class="w-[22px] h-[22px] drop-shadow-[0_1px_1px_rgba(0,0,0,.4)]"><use href="#d-note"/></svg>
        <svg class="w-[22px] h-[22px] drop-shadow-[0_1px_1px_rgba(0,0,0,.4)]"><use href="#d-gear"/></svg>
      </div>
    </div>
    <p class="w-[336px] h-[48px] pb-[4px] flex items-center justify-center text-[20px] tracking-[.6px] font-['Open_Sans',sans-serif]">Main interface</p>

    <!-- app -->
    <div class="w-[336px] h-[197px] border border-[#7f8c97] bg-[#cfe0ec] flex flex-col">
      <div class="h-[22px] shrink-0 flex items-center pl-[13px] pr-[12px] bg-[#bfd3e2] border-b border-[#8e9fad] text-[#1f2c36]">
        <svg class="w-[15px] h-[15px]"><use href="#home"/></svg>
        <div class="flex items-center gap-[6px] ml-[17px] text-[#50606d]">
          <svg class="w-[6px] h-[6px]"><use href="#shield"/></svg>
          <svg class="w-[5px] h-[7px]"><use href="#usb"/></svg>
        </div>
        <div class="ml-auto flex items-center h-[21px]">
          <svg class="w-[5px] h-[7px] text-[#50606d]"><use href="#pin"/></svg>
          <svg class="w-[8px] h-[6px] ml-[5px] text-[#3d4c58]"><use href="#wifi"/></svg>
          <span class="ml-[3px] w-[18px] text-[7.5px] text-[#586875]">16:06</span>
          <div class="ml-[3px] w-[18px] h-[21px] flex items-center justify-center"><svg class="w-[11px] h-[10px]"><use href="#cam"/></svg></div>
          <svg class="w-[12px] h-[11px] ml-[5px]"><use href="#speaker"/></svg>
          <svg class="w-[11px] h-[10px] ml-[8px]"><use href="#xbox"/></svg>
          <svg class="w-[12px] h-[9px] ml-[8px]"><use href="#windows"/></svg>
          <svg class="w-[15px] h-[10px] ml-[16px]"><use href="#back"/></svg>
        </div>
      </div>
      <div class="h-[137px] shrink-0 pt-[12px]">
        <div class="w-[320px] mx-auto -translate-x-[.5px] grid grid-cols-5 gap-y-[15px] text-[8.5px] leading-[10px] text-center text-[#26323b]">
          <div class="flex flex-col items-center gap-[6.500px]"><svg class="w-[31px] h-[31px] drop-shadow-[0_1px_1px_rgba(0,0,0,.5)]"><use href="#a-a2dp"/></svg><span class="scale-x-[.83] whitespace-nowrap">A2DP</span></div>
          <div class="flex flex-col items-center gap-[6.500px]"><svg class="w-[31px] h-[31px] drop-shadow-[0_1px_1px_rgba(0,0,0,.5)]"><use href="#a-cal"/></svg><span class="scale-x-[.83] whitespace-nowrap">Calendar</span></div>
          <div class="flex flex-col items-center gap-[6.500px]"><svg class="w-[31px] h-[31px] drop-shadow-[0_1px_1px_rgba(0,0,0,.5)]"><use href="#a-file"/></svg><span class="scale-x-[.83] whitespace-nowrap">FileBrowser</span></div>
          <div class="flex flex-col items-center gap-[6.500px]"><svg class="w-[31px] h-[31px] drop-shadow-[0_1px_1px_rgba(0,0,0,.5)]"><use href="#a-dvr"/></svg><span class="scale-x-[.83] whitespace-nowrap">DVR</span></div>
          <div class="flex flex-col items-center gap-[6.500px]"><svg class="w-[31px] h-[31px] drop-shadow-[0_1px_1px_rgba(0,0,0,.5)]"><use href="#a-avin"/></svg><span class="scale-x-[.83] whitespace-nowrap">AVIN</span></div>
          <div class="flex flex-col items-center gap-[6.500px]"><svg class="w-[31px] h-[31px] drop-shadow-[0_1px_1px_rgba(0,0,0,.5)]"><use href="#a-gal"/></svg><span class="scale-x-[.83] whitespace-nowrap">Gallery</span></div>
          <div class="flex flex-col items-center gap-[6.500px]"><svg class="w-[31px] h-[31px] drop-shadow-[0_1px_1px_rgba(0,0,0,.5)]"><use href="#a-easy"/></svg><span class="scale-x-[.83] whitespace-nowrap">EasyConnection</span></div>
          <div class="flex flex-col items-center gap-[6.500px]"><svg class="w-[31px] h-[31px] drop-shadow-[0_1px_1px_rgba(0,0,0,.5)]"><use href="#a-wheel"/></svg><span class="scale-x-[.83] whitespace-nowrap">Wheelkey Study</span></div>
          <div class="flex flex-col items-center gap-[6.500px]"><svg class="w-[31px] h-[31px] drop-shadow-[0_1px_1px_rgba(0,0,0,.5)]"><use href="#a-amp"/></svg><span class="scale-x-[.83] whitespace-nowrap">Amplifier</span></div>
          <div class="flex flex-col items-center gap-[6.500px]"><svg class="w-[31px] h-[31px] drop-shadow-[0_1px_1px_rgba(0,0,0,.5)]"><use href="#a-calc"/></svg><span class="scale-x-[.83] whitespace-nowrap">Calculator</span></div>
        </div>
        <div class="flex justify-center gap-[4.500px] mt-[10px]"><i class="w-[2px] h-[2px] rounded-full bg-[#55636e]"></i><i class="w-[2px] h-[2px] rounded-full bg-white"></i><i class="w-[2px] h-[2px] rounded-full bg-[#55636e]"></i><i class="w-[2px] h-[2px] rounded-full bg-[#55636e]"></i></div>
      </div>
      <div class="h-[36px] shrink-0 px-[29px] flex items-center justify-between bg-[#bfd3e2] border-t border-[#8e9fad]">
        <svg class="w-[22px] h-[22px] drop-shadow-[0_1px_1px_rgba(0,0,0,.4)]"><use href="#d-radio"/></svg>
        <svg class="w-[22px] h-[22px] drop-shadow-[0_1px_1px_rgba(0,0,0,.4)]"><use href="#d-bt"/></svg>
        <svg class="w-[22px] h-[22px] drop-shadow-[0_1px_1px_rgba(0,0,0,.4)]"><use href="#d-film"/></svg>
        <svg class="w-[22px] h-[22px] drop-shadow-[0_1px_1px_rgba(0,0,0,.4)]"><use href="#d-note"/></svg>
        <svg class="w-[22px] h-[22px] drop-shadow-[0_1px_1px_rgba(0,0,0,.4)]"><use href="#d-gear"/></svg>
      </div>
    </div>
    <p class="w-[336px] h-[47px] pb-[3px] flex items-center justify-center text-[20px] tracking-[.6px] font-['Open_Sans',sans-serif]">APP</p>

    <!-- music -->
    <div class="w-[336px] h-[198px] border border-[#7f8c97] bg-[#cfe0ec] flex flex-col">
      <div class="h-[23px] shrink-0 flex items-center pl-[13px] pr-[12px] bg-[#bfd3e2] border-b border-[#8e9fad] text-[#1f2c36]">
        <svg class="w-[15px] h-[15px]"><use href="#home"/></svg>
        <span class="ml-[26px] text-[7.5px] font-bold">Music</span>
        <div class="flex items-center gap-[6px] ml-[21px] text-[#50606d]">
          <svg class="w-[6px] h-[6px]"><use href="#shield"/></svg>
          <svg class="w-[5px] h-[7px]"><use href="#usb"/></svg>
        </div>
        <div class="ml-auto flex items-center h-[21px]">
          <svg class="w-[5px] h-[7px] text-[#50606d]"><use href="#pin"/></svg>
          <svg class="w-[8px] h-[6px] ml-[5px] text-[#3d4c58]"><use href="#wifi"/></svg>
          <span class="ml-[3px] w-[18px] text-[7.5px] text-[#586875]">16:06</span>
          <div class="ml-[3px] w-[18px] h-[21px] flex items-center justify-center bg-[#cbdce8]"><svg class="w-[11px] h-[10px]"><use href="#cam"/></svg></div>
          <svg class="w-[12px] h-[11px] ml-[5px]"><use href="#speaker"/></svg>
          <svg class="w-[11px] h-[10px] ml-[8px]"><use href="#xbox"/></svg>
          <svg class="w-[12px] h-[9px] ml-[8px]"><use href="#windows"/></svg>
          <svg class="w-[15px] h-[10px] ml-[16px]"><use href="#back"/></svg>
        </div>
      </div>
      <div class="h-[137px] shrink-0 text-[#1f2c36] flex flex-col">
        <div class="h-[115px] flex">
          <div class="w-[221px] pl-[34px] shrink-0">
            <p class="mt-[20px] h-[14px] w-[160px] overflow-hidden text-[10.500px] leading-[14px] whitespace-nowrap">vin、Willy William、HUGEL - Mi Ge</p>
            <svg class="w-[152px] h-[46px] mt-[11px]" viewBox="0 0 152 46"><path d="M5 46V2M9.500 46V2M14 46V17M18 46V24M22.500 46V30M27 46V34M31 46V35M35.500 46V37M40 46V38M44.500 46V38M49 46V39M53 46V40M57 46V40M62 46V41M66 46V41M70 46V41M75 46V42M79 46V42M83 46V42M88 46V42M92 46V42" stroke="#96a6b1" stroke-width="1.100"/><path d="M14 15h0M22 27h0" stroke="#26323b" stroke-width="1.200" stroke-linecap="round"/><path d="M96 44H152" stroke="#8a9aa5" stroke-width="1.100" stroke-dasharray="1.100 3.100"/></svg>
            <div class="mt-[9px] flex items-center h-[16px] pl-[3px]">
              <svg class="w-[12px] h-[12px]"><use href="#m-search"/></svg>
              <svg class="w-[14px] h-[10px] ml-[27px]"><use href="#m-eq"/></svg>
              <svg class="w-[14px] h-[12px] ml-[26px]"><use href="#m-heart"/></svg>
              <span class="ml-[21px] text-[9px] font-medium">ROCK</span>
            </div>
          </div>
          <svg class="w-[90px] h-[76px] mt-[9px]" viewBox="0 0 90 76"><ellipse cx="72" cy="38" rx="17" ry="27" fill="#15191c"/><rect width="78" height="74" fill="#c6d6e2"/><rect x="4.500" y="4" width="66" height="66" fill="#7b91a3"/><path d="M70.500 4v66h-66z" fill="#5b7184"/><g transform="translate(18 14) scale(1.750)" color="#f4f6f7"><use href="#note" width="24" height="24"/></g></svg>
        </div>
        <p class="mr-[40px] text-right text-[7.5px] leading-[10px]">3/706</p>
        <div class="flex items-center h-[10px] -mt-[1px] pl-[15px] pr-[15px] text-[7.5px]">
          <span class="w-[18px]">00:01</span>
          <div class="relative flex-1 mx-[8px] h-[1.500px] bg-[#14191d]"><i class="absolute -left-[1px] -top-[2px] w-[5px] h-[5px] rounded-full bg-[#2f78ad]"></i></div>
          <span class="w-[18px]">03:28</span>
        </div>
      </div>
      <div class="h-[36px] shrink-0 pl-[24px] pr-[25px] flex items-center justify-between bg-[#bfd3e2] border-t border-[#8e9fad] text-[#161c21]">
        <svg class="w-[18px] h-[15px]"><use href="#m-list"/></svg>
        <svg class="w-[18px] h-[12px]"><use href="#m-prev"/></svg>
        <svg class="w-[18px] h-[12px]"><use href="#m-pause"/></svg>
        <svg class="w-[18px] h-[12px]"><use href="#m-next"/></svg>
        <svg class="w-[18px] h-[11px]"><use href="#m-repeat"/></svg>
      </div>
    </div>
    <p class="w-[336px] h-[48px] pb-[4px] flex items-center justify-center text-[20px] tracking-[.6px] font-['Open_Sans',sans-serif]">Music</p>
    <div class="w-[336px] flex justify-center gap-[9px] mt-[2px]"><i class="w-[6px] h-[6px] rounded-full bg-[#111]"></i><i class="w-[6px] h-[6px] rounded-full bg-[#111]"></i><i class="w-[6px] h-[6px] rounded-full bg-[#111]"></i></div>
  </section>
</div>
</body>
</html>
